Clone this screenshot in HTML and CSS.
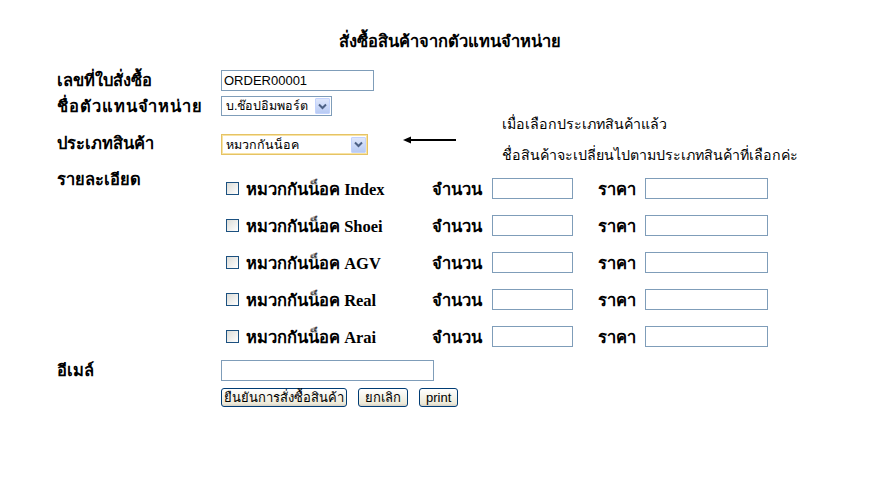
FILE: index.html
```html
<!DOCTYPE html>
<html lang="th">
<head>
<meta charset="utf-8">
<title>สั่งซื้อสินค้าจากตัวแทนจำหน่าย</title>
<link rel="stylesheet" href="styles.css">
</head>
<body>
<div class="page">
  <h1 class="title">สั่งซื้อสินค้าจากตัวแทนจำหน่าย</h1>
  <form class="form">
    <div class="row r1">
      <label class="lbl">เลขที่ใบสั่งซื้อ</label>
      <input class="txt w-order" type="text" value="ORDER00001">
    </div>
    <div class="row r2">
      <label class="lbl">ชื่อตัวแทนจำหน่าย</label>
      <div class="sel w-agent"><span class="sel-text">บ.ช๊อปอิมพอร์ต</span><span class="sel-btn"><svg width="9" height="7" viewBox="0 0 9 7"><path d="M1 1.5 L4.5 5 L8 1.5" fill="none" stroke="#4d6185" stroke-width="2"/></svg></span></div>
    </div>
    <div class="row r3">
      <label class="lbl">ประเภทสินค้า</label>
      <div class="sel w-type focus"><span class="sel-text">หมวกกันน็อค</span><span class="sel-btn"><svg width="9" height="7" viewBox="0 0 9 7"><path d="M1 1.5 L4.5 5 L8 1.5" fill="none" stroke="#4d6185" stroke-width="2"/></svg></span></div>
      <div class="note">
        <svg class="arrow" width="53" height="10" viewBox="0 0 53 10"><path d="M53 5 H6" stroke="#000" stroke-width="2"/><path d="M0 5 L8 1.5 L8 8.5 Z" fill="#000"/></svg>
        <div class="note-text">เมื่อเลือกประเภทสินค้าแล้ว<br>ชื่อสินค้าจะเปลี่ยนไปตามประเภทสินค้าที่เลือกค่ะ</div>
      </div>
    </div>
    <div class="row r4">
      <label class="lbl lbl-top">รายละเอียด</label>
      <div class="items">
        <div class="item"><span class="name"><span class="cb"></span>หมวกกันน็อค Index</span><span class="q">จำนวน</span><input class="txt w-qty" type="text"><span class="p">ราคา</span><input class="txt w-price" type="text"></div>
        <div class="item"><span class="name"><span class="cb"></span>หมวกกันน็อค Shoei</span><span class="q">จำนวน</span><input class="txt w-qty" type="text"><span class="p">ราคา</span><input class="txt w-price" type="text"></div>
        <div class="item"><span class="name"><span class="cb"></span>หมวกกันน็อค AGV</span><span class="q">จำนวน</span><input class="txt w-qty" type="text"><span class="p">ราคา</span><input class="txt w-price" type="text"></div>
        <div class="item"><span class="name"><span class="cb"></span>หมวกกันน็อค Real</span><span class="q">จำนวน</span><input class="txt w-qty" type="text"><span class="p">ราคา</span><input class="txt w-price" type="text"></div>
        <div class="item"><span class="name"><span class="cb"></span>หมวกกันน็อค Arai</span><span class="q">จำนวน</span><input class="txt w-qty" type="text"><span class="p">ราคา</span><input class="txt w-price" type="text"></div>
      </div>
    </div>
    <div class="row r5">
      <label class="lbl lbl-top">อีเมล์</label>
      <div class="email-col">
        <input class="txt w-email" type="text">
        <div class="buttons">
          <button type="button" class="btn btn-tight">ยืนยันการสั่งซื้อสินค้า</button>
          <button type="button" class="btn">ยกเลิก</button>
          <button type="button" class="btn">print</button>
        </div>
      </div>
    </div>
  </form>
</div>
</body>
</html>
```
FILE: styles.css
```css
* { box-sizing: border-box; }
html, body { margin: 0; padding: 0; background: #fff; }
body { font-family: Tahoma, "Liberation Sans", "Noto Sans", sans-serif; color: #000; }
.page { position: relative; width: 891px; height: 479px; padding-top: 30px; }
.title { margin: 0; font-size: 16.5px; font-weight: bold; text-align: center; line-height: 22px; padding-left: 8px; }
.form { padding-left: 57px; margin-top: 18px; }
.row { display: flex; align-items: center; }
.lbl { width: 164px; font-size: 16.5px; font-weight: bold; line-height: 20px; flex: none; white-space: nowrap; }
.lbl-top { align-self: flex-start; }
.r1 .lbl { margin-top: -1px; }
.r2 { margin-top: 5px; }
.r2 .lbl { letter-spacing: 1px; margin-top: -1px; }
.r3 { margin-top: 18px; position: relative; }
.r3 .lbl { margin-top: -3px; }
.r4 { margin-top: 17px; align-items: flex-start; }
.r4 .lbl { margin-top: -3px; }
.r5 { margin-top: 13px; align-items: flex-start; }
.r5 .lbl { margin-top: 0; }
.txt { height: 21px; border: 1px solid #7f9db9; padding: 1px 2px; font: 13px "Liberation Sans", Tahoma, sans-serif; background: #fff; outline: none; }
.w-order { width: 153px; }
.w-qty { width: 81px; }
.w-price { width: 123px; }
.w-email { width: 213px; display: block; }
.sel { display: flex; align-items: center; justify-content: space-between; border: 1px solid #7f9db9; background: #fff; padding: 1px; font-size: 12.5px; }
.sel-text { padding-left: 3px; line-height: 16px; white-space: nowrap; }
.sel-btn { width: 15px; height: 16px; background: linear-gradient(#dfe7fb, #b8cbf4); border: 1px solid #c3d3fd; display: flex; align-items: center; justify-content: center; border-radius: 1px; flex: none; }
.w-agent { width: 111px; height: 20px; }
.w-type { width: 147px; height: 21px; }
.focus { border-color: #e5c365; box-shadow: inset 0 0 0 1px #f8e3a4; }
.note { position: absolute; left: 346px; top: -28px; display: flex; align-items: flex-start; }
.arrow { flex: none; margin-top: 29px; }
.note-text { margin-left: 46px; margin-top: 3px; font-family: "Liberation Serif", "Times New Roman", serif; font-size: 14.2px; line-height: 31px; }
.items { display: flex; flex-direction: column; gap: 16px; padding-top: 6px; }
.item { display: flex; align-items: center; height: 21px; }
.name { width: 211px; display: flex; align-items: center; font-family: "Liberation Serif", "Times New Roman", serif; font-weight: bold; font-size: 16.5px; padding-left: 5px; white-space: nowrap; }
.cb { width: 13px; height: 13px; border: 1px solid #1c5180; background: linear-gradient(135deg, #dcdcd7, #fff); margin-right: 7px; flex: none; }
.q { width: 60px; font-size: 16.5px; font-weight: bold; }
.p { width: 47px; font-size: 16.5px; font-weight: bold; margin-left: 25px; }
.email-col { display: flex; flex-direction: column; }
.buttons { display: flex; gap: 11px; margin-top: 7px; }
.btn { height: 19px; padding: 0 6px; font: 13px Tahoma, "Liberation Sans", sans-serif; background: linear-gradient(#fff, #ece9d8 85%, #d6d0c5); border: 1px solid #003c74; border-radius: 3px; color: #000; line-height: 15px; white-space: nowrap; }
.btn-tight { padding: 0 2px; }
```
